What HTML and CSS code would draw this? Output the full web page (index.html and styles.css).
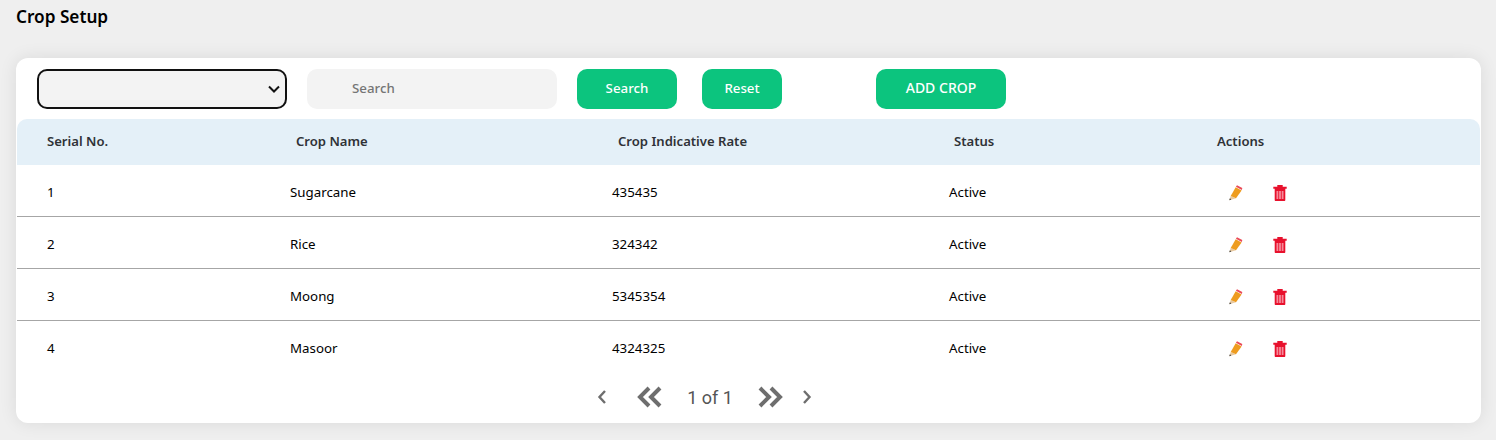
FILE: index.html
```html
<!DOCTYPE html>
<html lang="en">
<head>
<meta charset="utf-8">
<title>Crop Setup</title>
<link rel="stylesheet" href="styles.css">
</head>
<body>
<svg class="defs" width="0" height="0" aria-hidden="true">
  <symbol id="i-pencil" viewBox="0 0 16 16">
    <path class="pencil-wood" d="M2.700 11 1.300 15.200 8 13.300z"/>
    <path class="pencil-tip" d="M1.900 13.200 1.300 15.200 3.300 14.500z"/>
    <path class="pencil-body" d="M2.700 11 7.700 2.300 13.600 5.600 8 13.300z"/>
    <path class="pencil-end" d="M7.900 1.800 9 .3 14.300 2.900 13.800 5.100z"/>
  </symbol>
  <symbol id="i-trash" viewBox="0 0 16 16">
    <path class="trash" d="M5.300 0h5.400v1.700h4v2H1.300v-2h4zM2.700 3.700h10.600V15c0 .6-.4 1-1 1H3.700c-.6 0-1-.4-1-1z"/>
    <path class="trash-slot" d="M4.500 6h1.800v8H4.500zM7.100 6h1.800v8H7.100zM9.700 6h1.800v8H9.700z"/>
  </symbol>
</svg>
<h1 class="page-title">Crop Setup</h1>
<main class="card">
  <div class="toolbar">
    <select class="filter" aria-label="Filter"><option></option></select>
    <input class="search" type="text" placeholder="Search">
    <button class="btn btn-search">Search</button>
    <button class="btn btn-reset">Reset</button>
    <button class="btn btn-add">ADD CROP</button>
  </div>
  <div class="table-head">
    <span>Serial No.</span><span>Crop Name</span><span>Crop Indicative Rate</span><span>Status</span><span>Actions</span>
  </div>
  <div class="row">
    <span>1</span><span>Sugarcane</span><span>435435</span><span>Active</span>
    <span class="actions">
      <svg class="icon" viewBox="0 0 16 16"><use href="#i-pencil"/></svg>
      <svg class="icon" viewBox="0 0 16 16"><use href="#i-trash"/></svg>
    </span>
  </div>
  <div class="row">
    <span>2</span><span>Rice</span><span>324342</span><span>Active</span>
    <span class="actions">
      <svg class="icon" viewBox="0 0 16 16"><use href="#i-pencil"/></svg>
      <svg class="icon" viewBox="0 0 16 16"><use href="#i-trash"/></svg>
    </span>
  </div>
  <div class="row">
    <span>3</span><span>Moong</span><span>5345354</span><span>Active</span>
    <span class="actions">
      <svg class="icon" viewBox="0 0 16 16"><use href="#i-pencil"/></svg>
      <svg class="icon" viewBox="0 0 16 16"><use href="#i-trash"/></svg>
    </span>
  </div>
  <div class="row row-last">
    <span>4</span><span>Masoor</span><span>4324325</span><span>Active</span>
    <span class="actions">
      <svg class="icon" viewBox="0 0 16 16"><use href="#i-pencil"/></svg>
      <svg class="icon" viewBox="0 0 16 16"><use href="#i-trash"/></svg>
    </span>
  </div>
  <nav class="pager">
    <svg class="pg pg-single pg-first" viewBox="0 0 10 16"><path d="M8 2 2.500 8 8 14"/></svg>
    <svg class="pg pg-double" viewBox="0 0 26 22"><path d="M12 2 3 11l9 9M23 2l-9 9 9 9"/></svg>
    <span class="pg-text">1 of 1</span>
    <svg class="pg pg-double" viewBox="0 0 26 22"><path d="m3 2 9 9-9 9M14 2l9 9-9 9"/></svg>
    <svg class="pg pg-single pg-last" viewBox="0 0 10 16"><path d="m2 2 5.500 6L2 14"/></svg>
  </nav>
</main>
</body>
</html>
```

FILE: styles.css
```css
* { box-sizing: border-box; }
html, body { margin: 0; padding: 0; }
body {
  width: 1496px;
  height: 440px;
  overflow: hidden;
  background: #efefef;
  font-family: "Noto Sans", "Open Sans", sans-serif;
  color: #000;
  padding: 6px 15px 0 16px;
}
.defs { display: block; height: 0; }
.page-title {
  margin: 0;
  height: 52px;
  font-size: 17.200px;
  line-height: 22px;
  font-weight: 600;
  color: #000;
}
.card {
  width: 1465px;
  height: 365px;
  background: #fff;
  border-radius: 12px;
  box-shadow: 0 0 18px rgba(0, 0, 0, .09);
  padding: 11px 1px 0;
}
.toolbar {
  display: flex;
  align-items: center;
  height: 40px;
  margin-bottom: 10px;
  padding-left: 20px;
}
.filter {
  width: 250px;
  height: 40px;
  border: 2px solid #111;
  border-radius: 10px;
  appearance: none;
  background: #f3f3f3 url("data:image/svg+xml,%3Csvg xmlns='http://www.w3.org/2000/svg' viewBox='0 0 12 8'%3E%3Cpath d='M1 1.500 6 6.500 11 1.500' fill='none' stroke='%23111' stroke-width='2'/%3E%3C/svg%3E") no-repeat right 5px center / 12px 8px;
  margin-right: 20px;
  font: inherit;
}
.search {
  width: 250px;
  height: 40px;
  border: 0;
  border-radius: 10px;
  background: #f3f3f3;
  padding: 0 0 2px 45px;
  margin-right: 20px;
  font: 500 13.300px "Noto Sans", sans-serif;
}
.search::placeholder { color: #757575; opacity: 1; }
.btn {
  height: 40px;
  border: 0;
  border-radius: 10px;
  background: #0cc47e;
  color: #fff;
  font: 500 13.300px "Noto Sans", sans-serif;
  padding: 0 0 2px;
}
.btn-search { width: 100px; margin-right: 25px; }
.btn-reset { width: 80px; margin-right: 94px; }
.btn-add { width: 130px; font-size: 14px; padding-bottom: 3px; }
.table-head {
  display: grid;
  grid-template-columns: 249px 322px 336px 263px 1fr;
  align-items: center;
  height: 46px;
  padding: 0 0 2px 30px;
  background: #e4f0f8;
  border-radius: 10px 10px 0 0;
  font-size: 13.100px;
  font-weight: 600;
  color: #2f3237;
}
.row {
  display: grid;
  grid-template-columns: 243px 322px 337px 268px 1fr;
  align-items: center;
  height: 52px;
  padding: 2px 0 0 30px;
  border-bottom: 1px solid #a6a6a6;
  font-size: 13.300px;
}
.row-last { border-bottom: 0; }
.actions {
  display: flex;
  gap: 28px;
  padding: 2px 0 0 11px;
}
.icon { width: 16px; height: 16px; display: block; overflow: visible; }
.pencil-wood { fill: #e8c9a0; }
.pencil-tip { fill: #333; }
.pencil-body { fill: #ee9c1f; }
.pencil-end { fill: #ea4b57; }
.trash { fill: #e8112d; }
.trash-slot { fill: #f58a9a; }
.pager {
  display: flex;
  align-items: center;
  justify-content: center;
  height: 46px;
  margin-top: 1px;
  padding-right: 88px;
}
.pg { fill: none; stroke: #6e6e6e; display: block; }
.pg-single { width: 10px; height: 16px; stroke-width: 2.400; }
.pg-double { width: 26px; height: 22px; stroke-width: 4; }
.pg-text {
  font: 400 18px Roboto, sans-serif;
  color: #555;
  width: 94px;
  text-align: center;
}
.pg-first { margin-right: 30px; }
.pg-last { margin-left: 19px; }
```
